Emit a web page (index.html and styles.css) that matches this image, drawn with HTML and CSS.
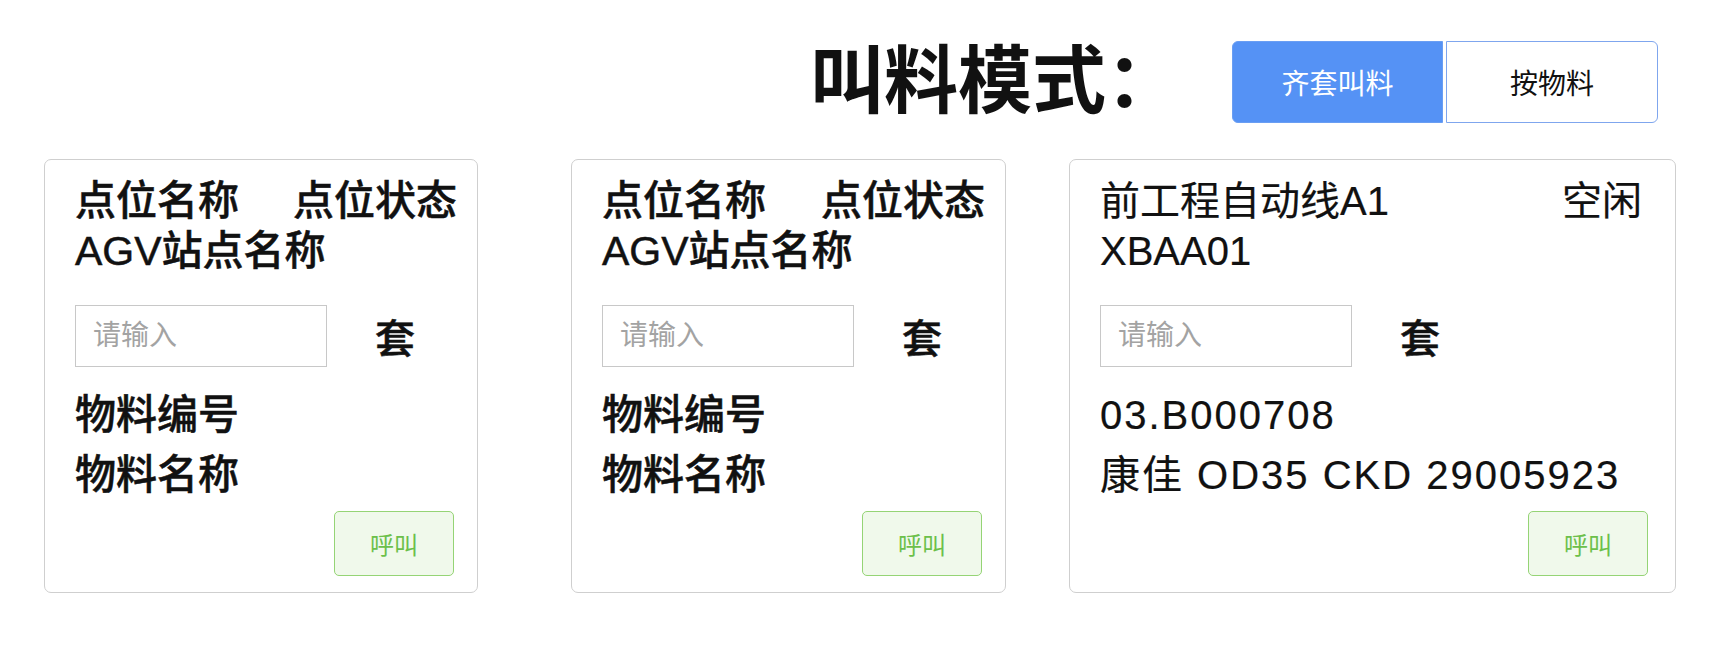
FILE: index.html
```html
<!DOCTYPE html>
<html lang="zh-CN">
<head>
<meta charset="utf-8">
<title>叫料模式</title>
<link rel="stylesheet" href="styles.css">
</head>
<body>
<div class="page">
  <div class="top">
    <h1 class="title">叫料模式：</h1>
    <div class="modes">
      <button class="mode mode-active">齐套叫料</button>
      <button class="mode">按物料</button>
    </div>
  </div>
  <div class="cards">
    <div class="card card-a">
      <div class="head label"><span>点位名称</span><span>点位状态</span></div>
      <div class="line label">AGV站点名称</div>
      <div class="qty">
        <input class="num" type="text" placeholder="请输入">
        <span class="unit">套</span>
      </div>
      <div class="mat label">物料编号</div>
      <div class="mat label">物料名称</div>
      <div class="foot"><button class="call">呼叫</button></div>
    </div>
    <div class="card card-b">
      <div class="head label"><span>点位名称</span><span>点位状态</span></div>
      <div class="line label">AGV站点名称</div>
      <div class="qty">
        <input class="num" type="text" placeholder="请输入">
        <span class="unit">套</span>
      </div>
      <div class="mat label">物料编号</div>
      <div class="mat label">物料名称</div>
      <div class="foot"><button class="call">呼叫</button></div>
    </div>
    <div class="card card-c">
      <div class="head value"><span>前工程自动线A1</span><span>空闲</span></div>
      <div class="line value">XBAA01</div>
      <div class="qty">
        <input class="num" type="text" placeholder="请输入">
        <span class="unit">套</span>
      </div>
      <div class="mat value wide">03.B000708</div>
      <div class="mat value wide">康佳 OD35 CKD 29005923</div>
      <div class="foot"><button class="call">呼叫</button></div>
    </div>
  </div>
</div>
</body>
</html>
```

FILE: styles.css
```css
* { box-sizing: border-box; }
html, body { margin: 0; padding: 0; background: #fff; }
body {
  font-family: "Liberation Sans", "Noto Sans CJK SC", sans-serif;
  color: #111;
  width: 1727px;
  height: 652px;
  overflow: hidden;
}
.page { padding-top: 41px; }

.top {
  display: flex;
  align-items: center;
  height: 82px;
  padding-left: 810px;
}
.title {
  margin: 0;
  font-size: 74px;
  font-weight: 700;
  line-height: 82px;
  width: 422px;
  letter-spacing: 0;
}
.modes { display: flex; }
.mode {
  font-family: "Liberation Sans", "Noto Sans CJK SC", sans-serif;
  font-size: 28px;
  width: 212px;
  height: 82px;
  padding: 0;
  background: #fff;
  color: #111;
  border: 1px solid #7fa6ee;
  border-radius: 0 6px 6px 0;
  margin-left: 3px;
}
.mode-active {
  width: 211px;
  margin-left: 0;
  background: #5592f5;
  border-color: #6a9ef3;
  color: #fff;
  border-radius: 6px 0 0 6px;
}

.cards {
  display: flex;
  margin-top: 36px;
  padding-left: 44px;
}
.card {
  border: 1px solid #cfcfcf;
  border-radius: 7px;
  padding: 16px 23px 16px 30px;
  height: 434px;
}
.card-a { width: 434px; margin-right: 93px; }
.card-b { width: 435px; margin-right: 63px; }
.card-c { width: 607px; padding-right: 27px; }

.head, .line {
  font-size: 40px;
  line-height: 50px;
  white-space: nowrap;
}
.head { display: flex; justify-content: space-between; margin-right: -3px; }
.card-c .head { margin-right: 6px; }

.qty {
  display: flex;
  align-items: center;
  height: 62px;
  margin-top: 29px;
}
.num {
  width: 252px;
  height: 62px;
  border: 1px solid #c8c8c8;
  border-radius: 0;
  padding: 0 0 0 17px;
  font-family: "Liberation Sans", "Noto Sans CJK SC", sans-serif;
  font-size: 28px;
  color: #333;
  outline: none;
}
.num::placeholder { color: #a3a3a3; }
.unit {
  margin-left: 48px;
  font-size: 40px;
  font-weight: 500;
  -webkit-text-stroke: 0.5px #111;
}

.mat {
  font-size: 40px;
  line-height: 60px;
  white-space: nowrap;
}
.qty + .mat { margin-top: 18px; }
.wide { letter-spacing: 2px; }

.label {
  font-size: 41px;
  font-weight: 500;
  -webkit-text-stroke: 0.5px #111;
}
.value { font-weight: 400; -webkit-text-stroke: 0.2px #111; }

.foot {
  display: flex;
  justify-content: flex-end;
  margin-top: 6px;
}
.call {
  width: 120px;
  height: 65px;
  padding: 0;
  background: #f0f9eb;
  border: 1px solid #95d475;
  border-radius: 5px;
  color: #6cc04a;
  font-family: "Noto Sans CJK SC", sans-serif;
  font-size: 24px;
}
```
